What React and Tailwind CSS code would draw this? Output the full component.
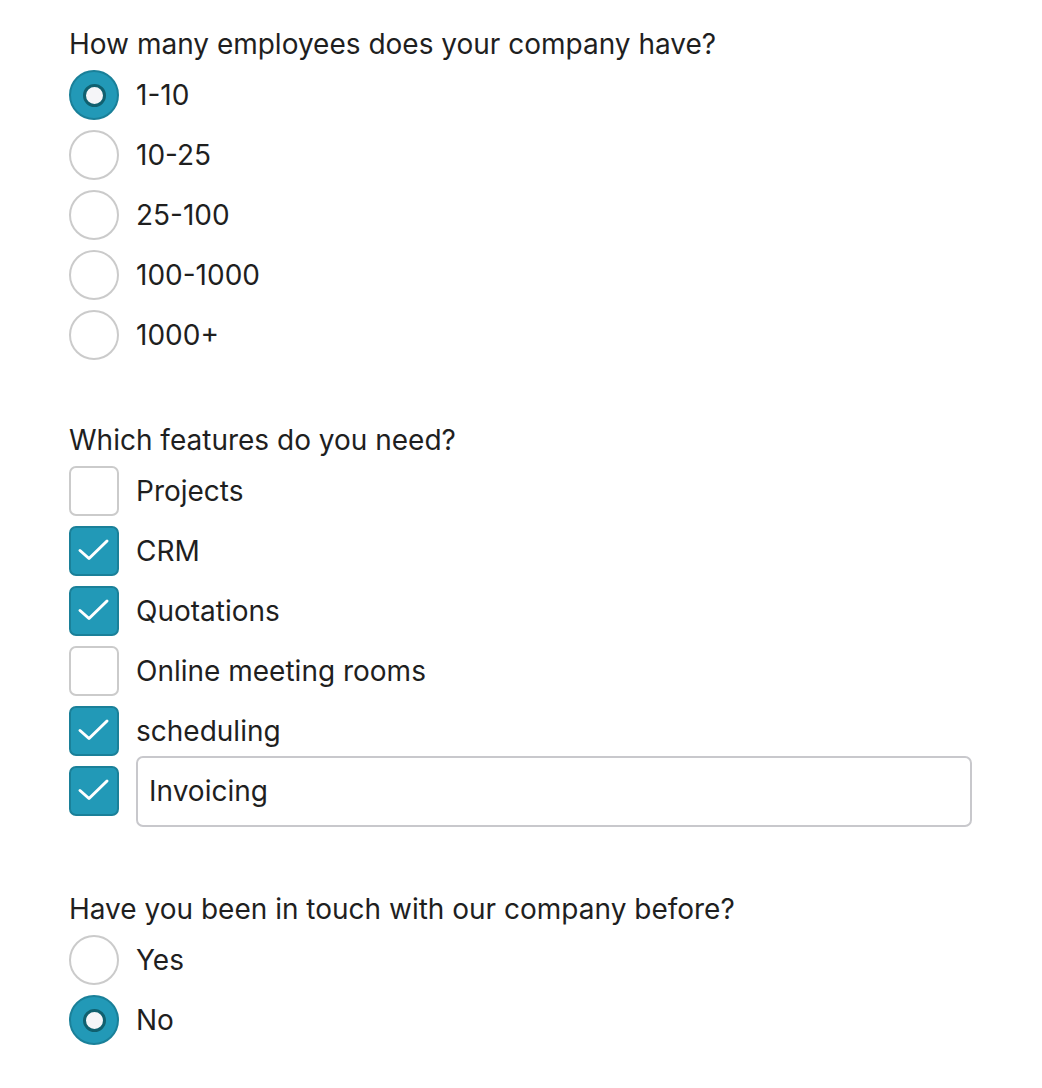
import React from "react";

function Radio({ checked }) {
  if (checked) {
    return (
      <div className="w-[50px] h-[50px] rounded-full bg-[#2299b7] border-2 border-[#1a8099] flex items-center justify-center shrink-0">
        <div className="w-[23px] h-[23px] rounded-full bg-[#f5f5f8] border-[3px] border-[#10606f]" />
      </div>
    );
  }
  return <div className="w-[50px] h-[50px] rounded-full bg-white border-2 border-[#cbcbcb] shrink-0" />;
}

function Check({ checked }) {
  if (checked) {
    return (
      <div className="w-[50px] h-[50px] rounded-[7px] bg-[#2299b7] border-2 border-[#1a8099] relative shrink-0">
        <svg className="absolute -left-[2px] -top-[2px]" width="50" height="50" viewBox="0 0 50 50" fill="none">
          <path d="M11 24.5 L20 32.5 L38 15" stroke="white" strokeWidth="3" strokeLinecap="round" strokeLinejoin="round" />
        </svg>
      </div>
    );
  }
  return <div className="w-[50px] h-[50px] rounded-[7px] bg-white border-2 border-[#cbcbcb] shrink-0" />;
}

function Row({ children, control }) {
  return (
    <div className="h-[60px] flex items-center">
      {control}
      <div className="ml-[17px] flex-1 flex items-center">{children}</div>
    </div>
  );
}

function Title({ children, className = "" }) {
  return <div className={"h-8 leading-8 text-[28px] text-[#1f1f1f] " + className}>{children}</div>;
}

export default function App() {
  const sizes = ["1-10", "10-25", "25-100", "100-1000", "1000+"];
  const feats = [
    ["Projects", false],
    ["CRM", true],
    ["Quotations", true],
    ["Online meeting rooms", false],
    ["scheduling", true],
  ];
  return (
    <div className="bg-white min-h-[1088px] w-[1042px] pl-[69px] pt-[28px] text-[#1f1f1f]" style={{ fontFamily: "Inter, 'Noto Sans', sans-serif" }}>
      <div className="w-[903px]">
        <Title>How many employees does your company have?</Title>
        <div className="mt-[5px]">
          {sizes.map((s, i) => (
            <Row key={s} control={<Radio checked={i === 0} />}>
              <span className="text-[28px]">{s}</span>
            </Row>
          ))}
        </div>

        <Title className="mt-[59px]">Which features do you need?</Title>
        <div className="mt-[5px]">
          {feats.map(([f, c]) => (
            <Row key={f} control={<Check checked={c} />}>
              <span className="text-[28px]">{f}</span>
            </Row>
          ))}
          <Row control={<Check checked />}>
            <div className="h-[71px] -my-[6px] flex-1 border-2 border-[#c8c8cc] rounded-[7px] flex items-center pl-[11px] text-[28px]">
              Invoicing
            </div>
          </Row>
        </div>

        <Title className="mt-[72px]">Have you been in touch with our company before?</Title>
        <div className="mt-[5px]">
          <Row control={<Radio checked={false} />}>
            <span className="text-[28px]">Yes</span>
          </Row>
          <Row control={<Radio checked />}>
            <span className="text-[28px]">No</span>
          </Row>
        </div>
      </div>
    </div>
  );
}
